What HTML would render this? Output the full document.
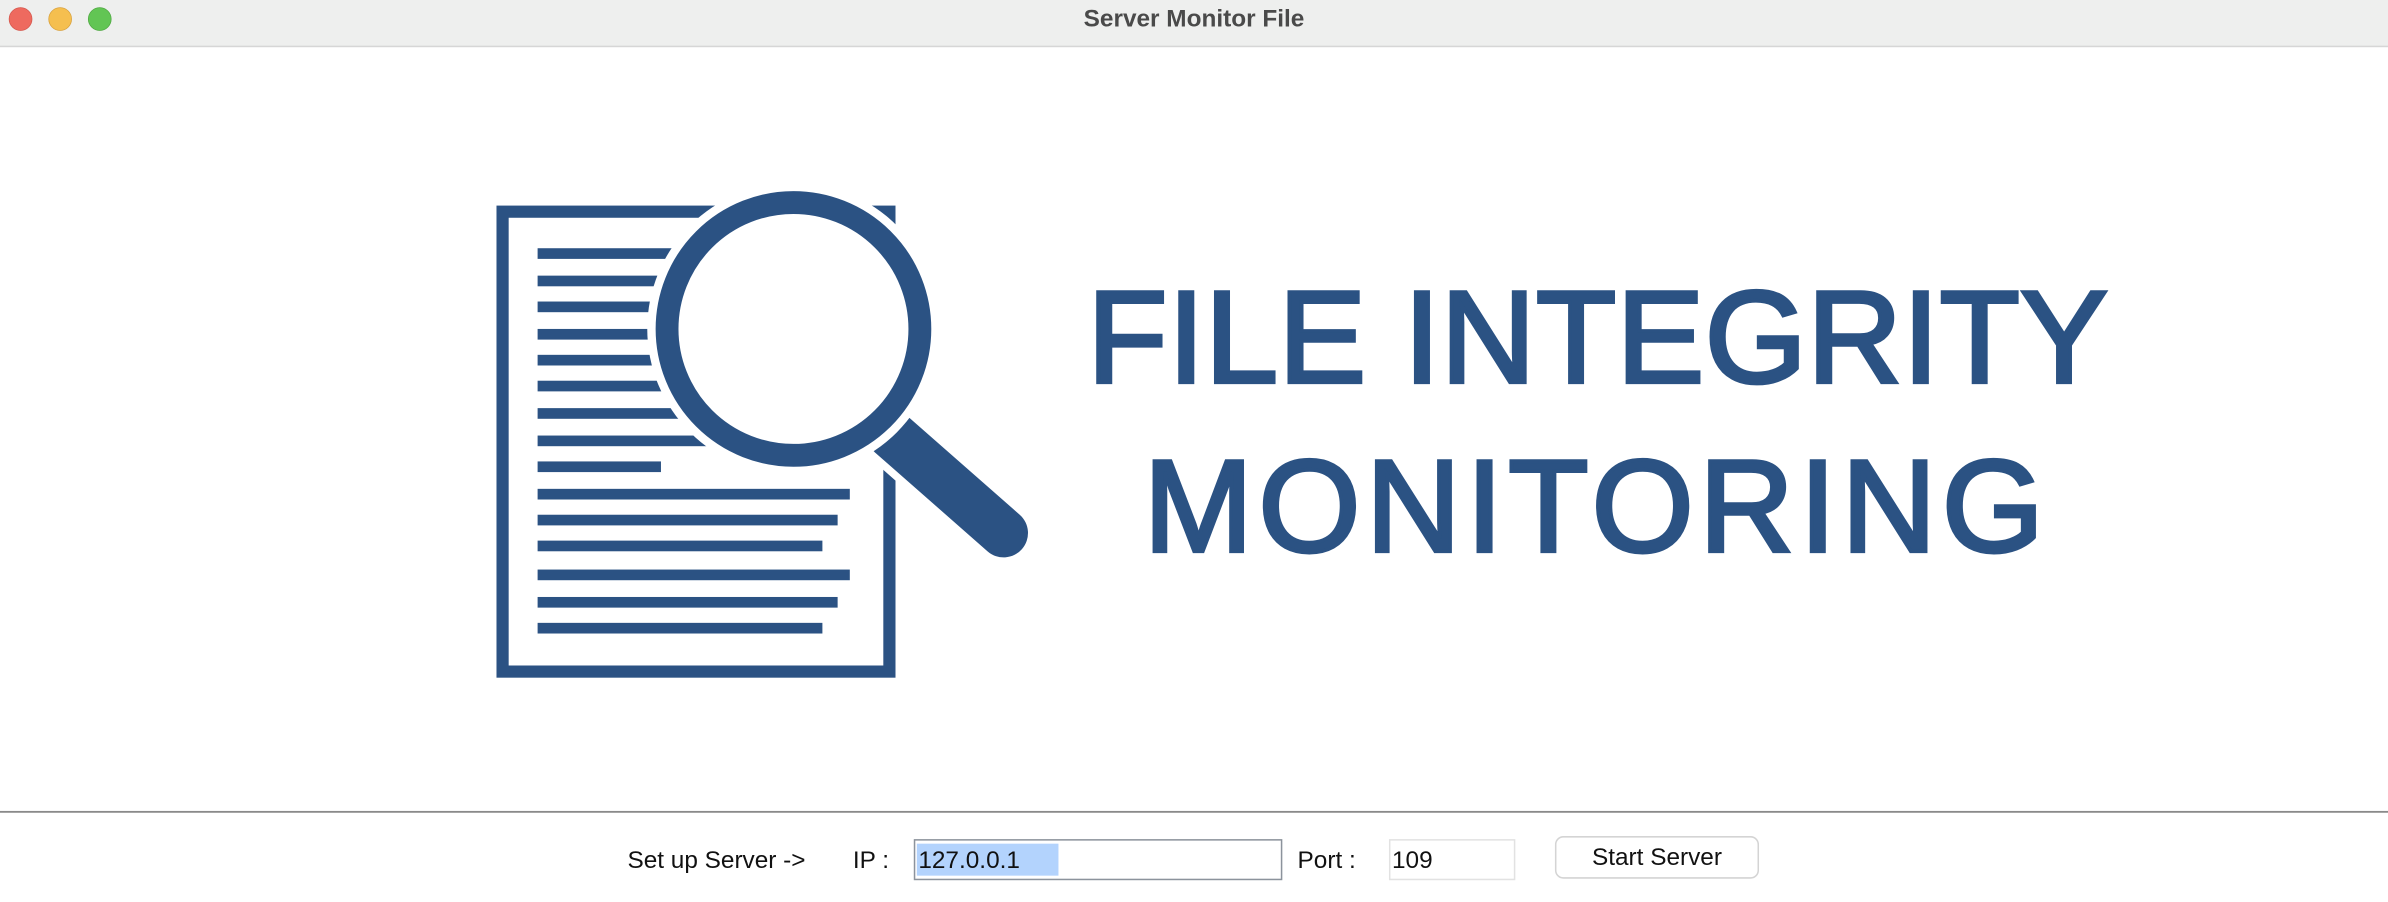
<!DOCTYPE html>
<html><head><meta charset="utf-8"><style>
html,body{margin:0;padding:0;background:#fff;width:2388px;height:902px;overflow:hidden}
svg{display:block}
</style></head><body>
<svg width="2388" height="902" viewBox="0 0 1568 592.3" preserveAspectRatio="none" xmlns="http://www.w3.org/2000/svg">
<rect x="0" y="0" width="1568" height="30.5" fill="#eeefee"/>
<rect x="0" y="30" width="1568" height="1" fill="#d6d6d6"/>
<circle cx="13.5" cy="12.5" r="7.5" fill="#ee6a5f" stroke="#d5574d" stroke-width="0.5"/>
<circle cx="39.5" cy="12.5" r="7.5" fill="#f5bf4f" stroke="#d9a23e" stroke-width="0.5"/>
<circle cx="65.5" cy="12.5" r="7.5" fill="#62c554" stroke="#4fa942" stroke-width="0.5"/>
<text x="784" y="17.5" text-anchor="middle" font-family="Liberation Sans, sans-serif" font-weight="bold" font-size="16" fill="#4a4a4a">Server Monitor File</text>

<g fill="#2b5283">
<rect x="330" y="139" width="254" height="302" fill="none" stroke="#2b5283" stroke-width="8"/>
<rect x="353" y="163" width="110" height="7"/>
<rect x="353" y="181" width="110" height="7"/>
<rect x="353" y="198" width="110" height="7"/>
<rect x="353" y="216" width="110" height="7"/>
<rect x="353" y="233" width="110" height="7"/>
<rect x="353" y="250" width="110" height="7"/>
<rect x="353" y="268" width="120" height="7"/>
<rect x="353" y="286" width="140" height="7"/>
<rect x="353" y="303" width="81" height="7"/>
<rect x="353" y="321" width="205" height="7"/>
<rect x="353" y="338" width="197" height="7"/>
<rect x="353" y="355" width="187" height="7"/>
<rect x="353" y="374" width="205" height="7"/>
<rect x="353" y="392" width="197" height="7"/>
<rect x="353" y="409" width="187" height="7"/>
</g>
<line x1="585" y1="285" x2="659" y2="350" stroke="#fff" stroke-width="42" stroke-linecap="round"/>
<line x1="585" y1="285" x2="659" y2="350" stroke="#2b5283" stroke-width="32" stroke-linecap="round"/>
<circle cx="521" cy="216" r="96" fill="#fff"/>
<circle cx="521" cy="216" r="83" fill="#fff" stroke="#2b5283" stroke-width="15"/>

<g font-family="Liberation Sans, sans-serif" font-size="86" fill="#2b5283" stroke="#2b5283" stroke-width="2.5">
<text x="714" y="251" textLength="670" lengthAdjust="spacing">FILE INTEGRITY</text>
<text x="751" y="362" textLength="591" lengthAdjust="spacing">MONITORING</text>
</g>

<rect x="0" y="532.5" width="1568" height="1.2" fill="#8a8a8a"/>
<g font-family="Liberation Sans, sans-serif" font-size="16" fill="#111">
<text x="412" y="570">Set up Server -&gt;</text>
<text x="560" y="570">IP :</text>
<rect x="600.5" y="551.5" width="241" height="26" fill="#fff" stroke="#8c939c" stroke-width="1"/>
<rect x="602" y="554" width="93" height="21" fill="#b3d3fd"/>
<text x="603" y="570">127.0.0.1</text>
<text x="852" y="570">Port :</text>
<rect x="912.5" y="551.5" width="82" height="26" fill="#fff" stroke="#e2e2e2" stroke-width="1"/>
<text x="914" y="570">109</text>
<rect x="1021.5" y="549.5" width="133" height="27" rx="5" fill="#fff" stroke="#d4d4d4" stroke-width="1"/>
<text x="1088" y="568" text-anchor="middle">Start Server</text>
</g>
</svg>
</body></html>
